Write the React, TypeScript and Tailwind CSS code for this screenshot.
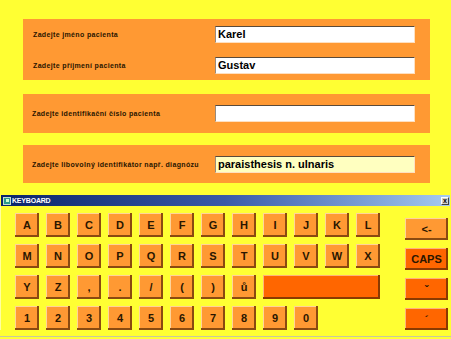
import React from "react";

const label = "text-[7px] font-bold text-[#2a1600] leading-none tracking-[0.35px]";
const inputBox =
  "w-[200px] h-[17px] bg-white border-t-[1px] border-l-[1px] border-t-[#5a4a3a] border-l-[#9a8a7a] border-b-[1px] border-r-[1px] border-b-[#ffe0c0] border-r-[#ffe0c0] px-[2px] flex items-center text-[11px] font-bold text-black leading-none";
const key =
  "flex items-center justify-center bg-[#ff9933] text-[11px] font-bold text-[#2a1600] shadow-[inset_-2px_-2px_0_#8a4a10,inset_1px_1px_0_#ffd39a] leading-none";
const darkKey =
  "flex items-center justify-center bg-[#ff6600] text-[11px] font-bold text-[#2a1600] shadow-[inset_-2px_-2px_0_#8a3a00,inset_1px_1px_0_#ffb37a] leading-none";

const row1 = ["A", "B", "C", "D", "E", "F", "G", "H", "I", "J", "K", "L"];
const row2 = ["M", "N", "O", "P", "Q", "R", "S", "T", "U", "V", "W", "X"];
const row3 = ["Y", "Z", ",", ".", "/", "(", ")", "ů"];
const row4 = ["1", "2", "3", "4", "5", "6", "7", "8", "9", "0"];

export default function App() {
  return (
    <div
      className="w-[451px] h-[339px] bg-[#ffff33] flex flex-col overflow-hidden"
      style={{ fontFamily: '"Liberation Sans", Arial, sans-serif' }}
    >
      {/* Form panels */}
      <div className="pt-[19px] pl-[23px] flex flex-col">
        <div className="w-[407px] h-[61px] bg-[#ff9933] pt-[7px] pl-[10px] pr-[15px] flex flex-col gap-[14px]">
          <div className="flex items-center justify-between">
            <span className={label}>Zadejte jméno pacienta</span>
            <div className={inputBox}>Karel</div>
          </div>
          <div className="flex items-center justify-between">
            <span className={label}>Zadejte příjmení pacienta</span>
            <div className={inputBox}>Gustav</div>
          </div>
        </div>

        <div className="mt-[14px] w-[407px] h-[39px] bg-[#ff9933] pl-[9px] pr-[15px] flex items-center justify-between">
          <span className={label}>Zadejte identifikační číslo pacienta</span>
          <div className={inputBox}></div>
        </div>

        <div className="mt-[12px] w-[407px] h-[38px] bg-[#ff9933] pl-[9px] pr-[15px] flex items-center justify-between">
          <span className={label}>Zadejte libovolný identifikátor např. diagnózu</span>
          <div className={inputBox + " !bg-[#ffffc0]"}>paraisthesis n. ulnaris</div>
        </div>
      </div>

      {/* Keyboard window */}
      <div className="mt-[12px] flex-1 flex flex-col border-b-[1px] border-[#c8c8a0] mb-[2px]">
        <div className="h-[11px] mx-[1px] bg-gradient-to-r from-[#0a246a] via-[#3a5aa8] to-[#a6caf0] flex items-center justify-between pl-[2px] pr-[1px]">
          <div className="flex items-center gap-[1px]">
            <div className="w-[8px] h-[8px] bg-[#2a9a8a] border-[1px] border-[#c0e0d0] flex items-center justify-center">
              <div className="w-[3px] h-[3px] bg-[#d0ffd0]" />
            </div>
            <span className="text-[7px] font-bold text-white leading-none tracking-[-0.2px]">KEYBOARD</span>
          </div>
          <div className="w-[8px] h-[8px] bg-[#d4d0c8] border-[1px] border-b-[#404040] border-r-[#404040] border-t-white border-l-white flex items-center justify-center text-[7px] font-bold text-black leading-none">
            x
          </div>
        </div>

        <div className="flex pl-[14px] pt-[7px] border-l-[1px] border-[#ffffa0]">
          <div className="grid grid-cols-[repeat(12,24px)] auto-rows-[24px] gap-[7px]">
            {row1.map((k) => (
              <div key={k} className={key}>{k}</div>
            ))}
            {row2.map((k) => (
              <div key={k} className={key}>{k}</div>
            ))}
            {row3.map((k) => (
              <div key={k} className={key}>{k}</div>
            ))}
            <div className={darkKey + " col-span-4"}></div>
            {row4.map((k) => (
              <div key={k} className={key}>{k}</div>
            ))}
          </div>

          <div className="ml-[25px] mt-[5px] flex flex-col gap-[8px]">
            <div className={key + " w-[43px] h-[22px]"}>&lt;-</div>
            <div className={darkKey + " w-[43px] h-[22px] text-[#1a0a00]"}>CAPS</div>
            <div className={darkKey + " w-[43px] h-[22px]"}>ˇ</div>
            <div className={darkKey + " w-[43px] h-[22px]"}>´</div>
          </div>
        </div>
      </div>
    </div>
  );
}
